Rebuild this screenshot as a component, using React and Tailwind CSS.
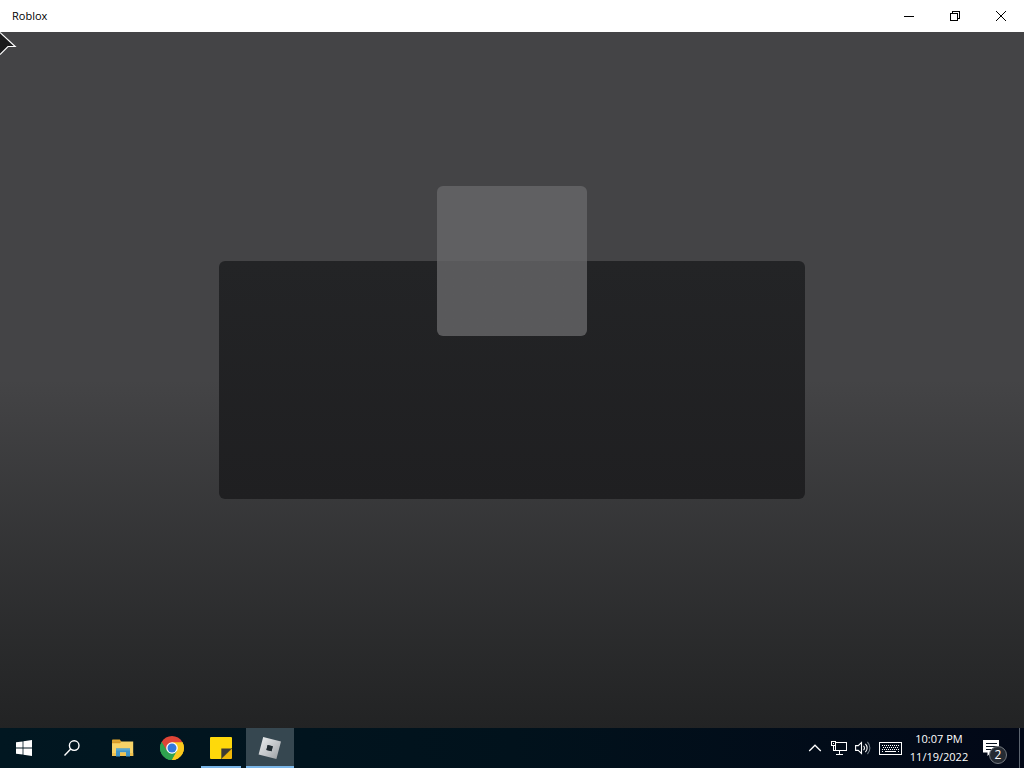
import React from "react";

function TitleBar() {
  return (
    <header className="flex h-8 shrink-0 items-stretch justify-between bg-white text-black">
      <h1 className="flex items-center pl-3 text-[11px] leading-4">Roblox</h1>
      <div className="flex">
        <button type="button" aria-label="Minimize" className="flex w-[46px] items-center justify-center hover:bg-gray-200">
          <svg width="10" height="10" viewBox="0 0 10 10" shapeRendering="crispEdges">
            <path d="M0 5h10v1H0z" />
          </svg>
        </button>
        <button type="button" aria-label="Restore" className="flex w-[46px] items-center justify-center hover:bg-gray-200">
          <svg width="10" height="10" viewBox="0 0 10 10" fill="none" stroke="#000" shapeRendering="crispEdges">
            <path d="M.5 2.5h7v7h-7zM2.5 2.5v-2h7v7h-2" />
          </svg>
        </button>
        <button type="button" aria-label="Close" className="flex w-[46px] items-center justify-center hover:bg-red-500">
          <svg width="10" height="10" viewBox="0 0 10 10" fill="none" stroke="#000">
            <path d="M0 0l10 10M10 0L0 10" />
          </svg>
        </button>
      </div>
    </header>
  );
}

function Pointer() {
  return (
    <svg className="absolute left-0 top-0" width="18" height="26" viewBox="0 0 18 26">
      <path d="M0 0L15.5 14.5H8L0 23z" fill="#1b1b1c" />
      <path d="M0 .5L15.2 14.5H8L0 22.5" fill="none" stroke="#fff" strokeWidth="1.1" />
    </svg>
  );
}

function LoadingScreen() {
  return (
    <main className="relative flex grow items-center justify-center overflow-hidden bg-linear-to-b from-[#444446] from-50% to-[#222324]">
      <Pointer />
      <section aria-label="Loading" className="relative h-[238px] w-[586px] rounded-md bg-linear-to-b from-[#232426] to-[#1f1f21]">
        <div className="absolute left-1/2 top-0 size-[150px] -translate-x-1/2 -translate-y-1/2 rounded-md bg-linear-to-b from-[#606062] from-50% to-[#59595b] to-50%" />
      </section>
    </main>
  );
}

function WindowsIcon() {
  return (
    <svg width="16" height="16" viewBox="0 0 16 16" fill="#fff">
      <path d="M0 2.3l6.6-.9v6.2H0zM7.4 1.3L16 0v7.6H7.4zM0 8.4h6.6v6.2L0 13.7zM7.4 8.4H16V16l-8.6-1.2z" />
    </svg>
  );
}

function SearchIcon() {
  return (
    <svg width="16" height="16" viewBox="0 0 16 16" fill="none" stroke="#fff" strokeWidth="1.4">
      <circle cx="10.2" cy="5.6" r="4.8" />
      <path d="M6.7 9.1L.5 15.5" />
    </svg>
  );
}

function FolderIcon() {
  return (
    <svg width="22" height="18" viewBox="0 0 22 18">
      <path d="M0 1.2Q0 .5.8.5h7l1.6 2.2H0z" fill="#e5a72c" />
      <path d="M0 2.5h21.2V17H0z" fill="#f8d367" />
      <path d="M0 2.5h9.5L8 4.2H0z" fill="#d99a27" />
      <path d="M0 14h21.2v3H0z" fill="#f1c24e" />
      <path d="M4 9.5h14v8h-4v-4.3H8v4.3H4z" fill="#3f94c8" />
      <path d="M4 9.5h14v2H4z" fill="#5ba8cf" />
    </svg>
  );
}

function ChromeIcon() {
  return (
    <svg width="24" height="24" viewBox="0 0 24 24">
      <path d="M12 12L1.61 6A12 12 0 0 1 22.39 6z" fill="#df4537" />
      <path d="M12 12L22.39 6A12 12 0 0 1 12 24z" fill="#fbc91d" />
      <path d="M12 12V24A12 12 0 0 1 1.61 6z" fill="#2fa34f" />
      <path d="M12 6.2h10.5l-5.4 8.7z" fill="#fbc91d" />
      <path d="M17.1 14.8L12 24l-5-9.3z" fill="#2fa34f" />
      <path d="M1.61 6l5.3 9L12 6.2z" fill="#df4537" />
      <path d="M1.61 6l5.3 9 5.1 2.5L12 24A12 12 0 0 1 1.61 6z" fill="#2fa34f" />
      <path d="M12 24l5.1-9.1L22.4 6.2A12 12 0 0 1 12 24z" fill="#fbc91d" />
      <circle cx="12" cy="12" r="5.8" fill="#fff" />
      <circle cx="12" cy="12" r="4.5" fill="#3279dc" />
    </svg>
  );
}

function StickyIcon() {
  return (
    <svg width="22" height="22" viewBox="0 0 22 22">
      <path d="M1 0h20q1 0 1 1v10L11 22H1q-1 0-1-1V1q0-1 1-1z" fill="#fed90b" />
      <path d="M11.3 22V11.5H22z" fill="#3c3a35" />
      <path d="M11.3 22L22 11.5V21q0 1-1 1z" fill="#f0b808" />
    </svg>
  );
}

function RobloxIcon() {
  return (
    <svg width="24" height="24" viewBox="0 0 24 24">
      <defs>
        <linearGradient id="metal" x1="0" y1="0" x2="1" y2="1">
          <stop offset="0" stopColor="#edf0f1" />
          <stop offset=".55" stopColor="#c2c5c8" />
          <stop offset="1" stopColor="#979b9f" />
        </linearGradient>
      </defs>
      <path d="M5.2 1L23 5.6 18.4 23 .6 18.4zM9.6 8.9L8.4 13.9l5.200 1.300L14.800 10.200z" fill="url(#metal)" fillRule="evenodd" />
      <path d="M9.600 8.900L14.800 10.200l-1.200 5-5.200-1.300z" fill="#202a30" />
    </svg>
  );
}

function TaskButton({ label, open, active, children }) {
  return (
    <button
      type="button"
      aria-label={label}
      className={`relative flex w-12 items-center justify-center ${active ? "bg-[#364750]" : ""}`}
    >
      {children}
      {open && (
        <span className={`absolute bottom-0 h-0.5 bg-[#79b5e7] ${active ? "inset-x-0" : "inset-x-1"}`} />
      )}
    </button>
  );
}

function Tray() {
  return (
    <div className="flex items-stretch">
      <button type="button" aria-label="Show hidden icons" className="flex w-6 items-center justify-center">
        <svg width="14" height="8" viewBox="0 0 14 8" fill="none" stroke="#fff" strokeWidth="1.3">
          <path d="M1.2 7L7 1.2 12.8 7" />
        </svg>
      </button>
      <button type="button" aria-label="Network" className="flex w-6 items-center justify-center">
        <svg width="16" height="14" viewBox="0 0 16 14" fill="none" stroke="#fff" shapeRendering="crispEdges">
          <path d="M5 1.5h10.5v8H4.5V5M.5.5h4v4h-4zM2.5 4.5v5h2M8.5 9.5v4M5 13.5h7" />
          <path d="M2 2.5h1" />
        </svg>
      </button>
      <button type="button" aria-label="Volume" className="flex w-6 items-center justify-center">
        <svg width="16" height="14" viewBox="0 0 16 14" fill="none" stroke="#fff" strokeWidth="1.1">
          <path d="M.6 4.6h2.6L6.5 1.5v11L3.2 9.4H.6z" />
          <path d="M8.5 4.8a3 3 0 0 1 0 4.4M10.4 2.8a6 6 0 0 1 0 8.4" />
          <path d="M12.4 1a8.5 8.5 0 0 1 0 12" stroke="#75808b" />
        </svg>
      </button>
      <button type="button" aria-label="Touch keyboard" className="flex w-[31px] items-center justify-center">
        <svg width="23" height="13" viewBox="0 0 23 13" fill="none" stroke="#fff" shapeRendering="crispEdges">
          <path d="M.5.5h22v12H.5z" />
          <path d="M3 3.5h17M4 5.5h15M3 7.5h17" strokeDasharray="1 1" />
          <path d="M6 9.5h11M3 9.5h1M19 9.5h1" />
        </svg>
      </button>
      <button type="button" aria-label="Clock" className="flex w-[66px] flex-col items-center justify-center gap-0.5 text-[11px] leading-4 text-white">
        <span>10:07 PM</span>
        <span>11/19/2022</span>
      </button>
      <button type="button" aria-label="Notifications" className="relative flex w-[47px] items-center pl-[11px]">
        <svg width="17" height="16" viewBox="0 0 17 16">
          <path d="M0 0h16v12.5H8L4.5 16v-3.5H0z" fill="#fff" />
          <path d="M2.5 3.5h11M2.5 6.5h11M2.5 9.5h7" stroke="#06111f" shapeRendering="crispEdges" />
        </svg>
        <span className="absolute left-[17px] top-[18px] flex size-[18px] items-center justify-center rounded-full border border-[#74797f] bg-[#252b33] text-xs leading-4 text-white">
          2
        </span>
      </button>
      <button type="button" aria-label="Show desktop" className="w-[5px] border-l border-[#5d6570]" />
    </div>
  );
}

function Taskbar() {
  return (
    <footer className="flex h-10 shrink-0 items-stretch justify-between bg-linear-to-r from-[#011721] via-[#01121c] to-[#020817]">
      <nav aria-label="Taskbar" className="flex items-stretch">
        <TaskButton label="Start"><WindowsIcon /></TaskButton>
        <TaskButton label="Search"><SearchIcon /></TaskButton>
        <div className="ml-[3px] flex gap-px">
          <TaskButton label="File Explorer"><FolderIcon /></TaskButton>
          <TaskButton label="Google Chrome"><ChromeIcon /></TaskButton>
          <TaskButton label="Sticky Notes" open><StickyIcon /></TaskButton>
          <TaskButton label="Roblox" open active><RobloxIcon /></TaskButton>
        </div>
      </nav>
      <Tray />
    </footer>
  );
}

export default function App() {
  return (
    <div className="flex h-screen flex-col overflow-hidden font-['Open_Sans','Noto_Sans',sans-serif]">
      <TitleBar />
      <LoadingScreen />
      <Taskbar />
    </div>
  );
}
